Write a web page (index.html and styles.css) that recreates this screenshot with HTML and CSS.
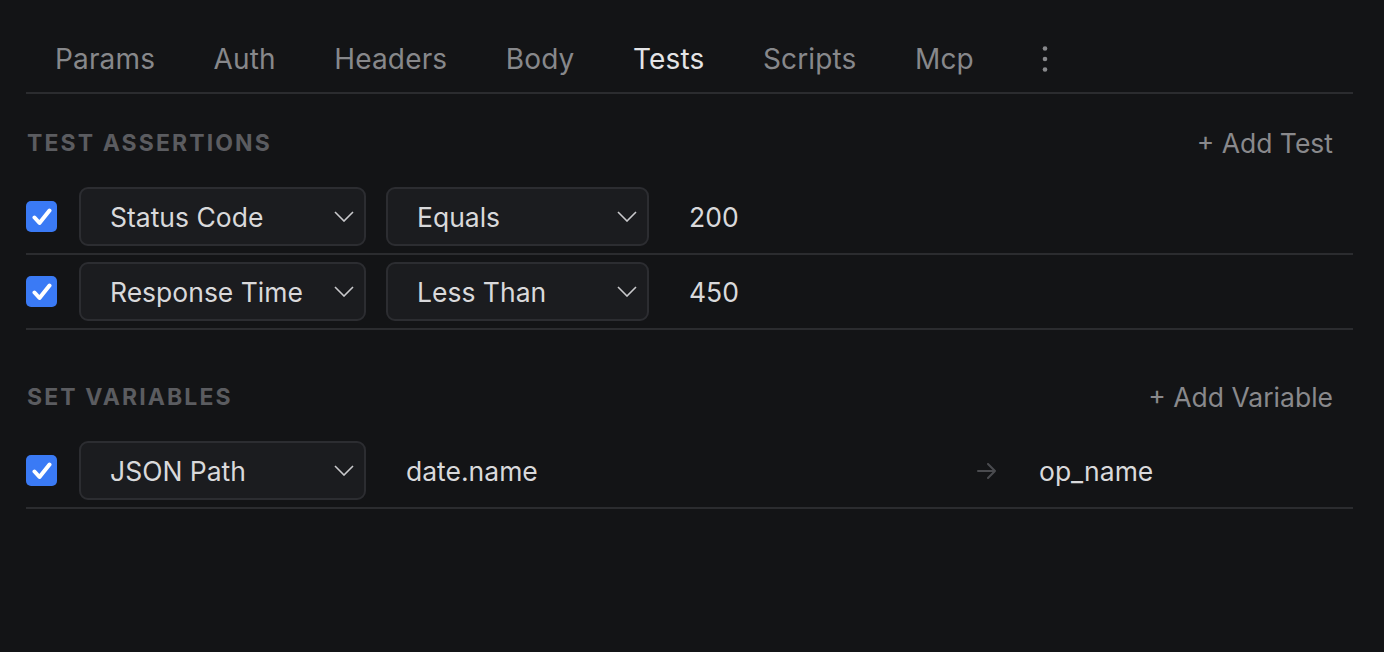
FILE: index.html
```html
<!DOCTYPE html>
<html lang="en">
<head>
  <meta charset="UTF-8">
  <meta name="viewport" content="width=device-width, initial-scale=1.0">
  <title>Request Tests</title>
  <link rel="stylesheet" href="styles.css">
</head>
<body>
  <div class="panel">
    <nav class="tabs">
      <span class="tab">Params</span>
      <span class="tab">Auth</span>
      <span class="tab">Headers</span>
      <span class="tab">Body</span>
      <span class="tab active">Tests</span>
      <span class="tab">Scripts</span>
      <span class="tab">Mcp</span>
      <span class="tab more">
        <svg width="6" height="28" viewBox="0 0 6 28"><circle cx="3" cy="3.5" r="2.3"/><circle cx="3" cy="14" r="2.3"/><circle cx="3" cy="24.5" r="2.3"/></svg>
      </span>
    </nav>

    <section class="section">
      <div class="section-head">
        <h2>Test Assertions</h2>
        <button class="add">+ Add Test</button>
      </div>
      <div class="row">
        <span class="check"><svg width="20" height="18" viewBox="0 0 20 18"><path d="M2.5 9.5 L7.5 15 L17.5 2.5"/></svg></span>
        <div class="select wide">Status Code<svg class="chev" width="20" height="11" viewBox="0 0 20 11"><path d="M1 1 L10 10 L19 1"/></svg></div>
        <div class="select">Equals<svg class="chev" width="20" height="11" viewBox="0 0 20 11"><path d="M1 1 L10 10 L19 1"/></svg></div>
        <span class="value">200</span>
      </div>
      <div class="row">
        <span class="check"><svg width="20" height="18" viewBox="0 0 20 18"><path d="M2.5 9.5 L7.5 15 L17.5 2.5"/></svg></span>
        <div class="select wide">Response Time<svg class="chev" width="20" height="11" viewBox="0 0 20 11"><path d="M1 1 L10 10 L19 1"/></svg></div>
        <div class="select">Less Than<svg class="chev" width="20" height="11" viewBox="0 0 20 11"><path d="M1 1 L10 10 L19 1"/></svg></div>
        <span class="value">450</span>
      </div>
    </section>

    <section class="section vars">
      <div class="section-head">
        <h2>Set Variables</h2>
        <button class="add">+ Add Variable</button>
      </div>
      <div class="row">
        <span class="check"><svg width="20" height="18" viewBox="0 0 20 18"><path d="M2.5 9.5 L7.5 15 L17.5 2.5"/></svg></span>
        <div class="select wide">JSON Path<svg class="chev" width="20" height="11" viewBox="0 0 20 11"><path d="M1 1 L10 10 L19 1"/></svg></div>
        <span class="value var-key">date.name</span>
        <svg class="arrow" width="20" height="16" viewBox="0 0 20 16"><path d="M1 8 H18 M11 1 L18 8 L11 15"/></svg>
        <span class="value var-name">op_name</span>
      </div>
    </section>
  </div>
</body>
</html>
```

FILE: styles.css
```css
body {
  margin: 0;
  background-color: #131416;
  font-family: Inter, "Noto Sans", sans-serif;
  color: #d9d9db;
}

.panel {
  margin: 0 31px 0 26px;
}

/* tab strip */
.tabs {
  display: flex;
  align-items: center;
  height: 67px;
  margin-top: 25px;
  padding-left: 29px;
  border-bottom: 2px solid #2b2c2f;
}

.tab {
  font-size: 28px;
  letter-spacing: 0.15px;
  color: #87888b;
  margin-right: 58.5px;
  line-height: 34px;
}

.tab.active {
  color: #e4e4e6;
}

.tab.more {
  display: flex;
  margin-left: 10px;
}

.tab.more svg {
  fill: #87888b;
}

/* sections */
.section-head {
  display: flex;
  align-items: center;
  justify-content: space-between;
  height: 48px;
  padding: 25px 20px 13px 1px;
}

.section.vars {
  margin-top: 18px;
}

h2 {
  margin: 0;
  font-size: 23px;
  font-weight: 700;
  letter-spacing: 2.1px;
  text-transform: uppercase;
  color: #5b5c60;
}

.add {
  background: none;
  border: none;
  padding: 0;
  font-family: inherit;
  font-size: 26.5px;
  color: #89898c;
}

/* rows */
.row {
  display: flex;
  align-items: center;
  padding: 7px 0;
  border-bottom: 2px solid #2b2c2f;
}

.check {
  flex: none;
  display: flex;
  align-items: center;
  justify-content: center;
  width: 31px;
  height: 31px;
  margin-right: 22px;
  border-radius: 5px;
  background-color: #3a7af5;
}

.check svg path {
  fill: none;
  stroke: #fff;
  stroke-width: 4;
  stroke-linecap: round;
  stroke-linejoin: round;
}

.select {
  flex: none;
  display: flex;
  align-items: center;
  justify-content: space-between;
  box-sizing: border-box;
  width: 263px;
  height: 59px;
  margin-right: 20px;
  padding: 0 10px 0 29px;
  border: 2px solid #2c2d31;
  border-radius: 9px;
  background-color: #1b1c1f;
  font-size: 26.5px;
  color: #d9d9db;
}

.select.wide {
  width: 287px;
}

.chev path {
  fill: none;
  stroke: #c9c9cc;
  stroke-width: 1.6;
}

.value {
  font-size: 26.5px;
  padding-left: 20px;
  color: #d9d9db;
}

.var-key {
  flex: 1;
}

.arrow path {
  fill: none;
  stroke: #4a4b4f;
  stroke-width: 2;
  stroke-linecap: round;
  stroke-linejoin: round;
}

.var-name {
  width: 314px;
  padding-left: 42px;
}
```
